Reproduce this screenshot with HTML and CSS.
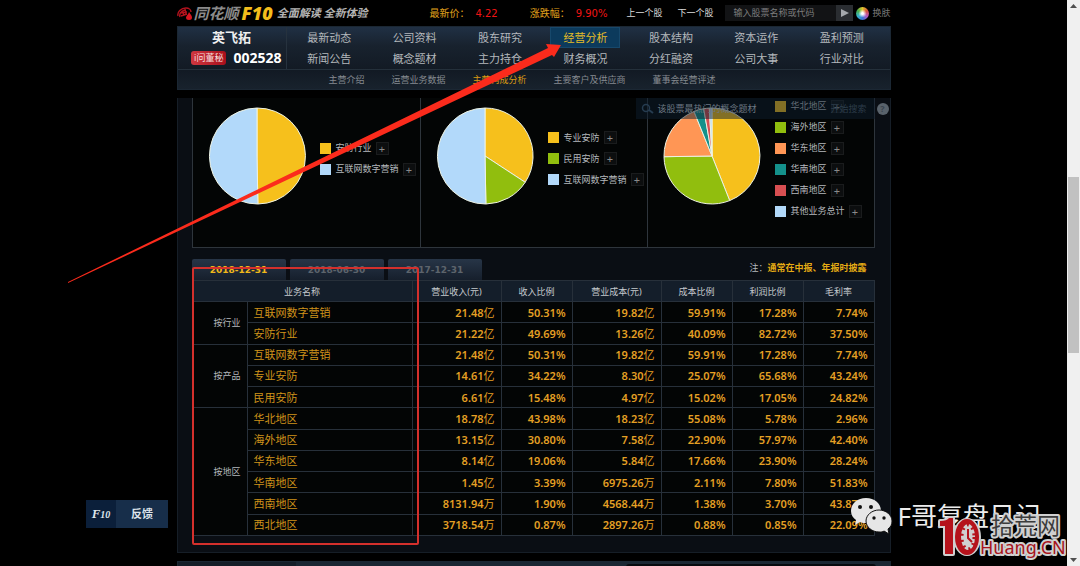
FILE: index.html
```html
<!DOCTYPE html>
<html lang="zh-CN">
<head>
  <meta charset="UTF-8">
  <meta name="viewport" content="width=device-width, initial-scale=1.0">
  <title>英飞拓(002528) 经营分析</title>
  <link rel="stylesheet" href="styles.css">
</head>
<body>

<main class="page">
  <div class="wrap">

    <!-- Top bar -->
    <header class="topbar">
      <a class="logo" href="#">
        <svg class="logo-mark" width="16" height="13" viewBox="0 0 16 13">
          <path d="M1 9C0 5 4 1 9 1c3 0 5 2 5 4M3 10c-1-3 1-6 5-7M5 4l2 4M8 2l1 5M3 6l7-1M4 9l6-2" fill="none" stroke="#b3121d" stroke-width="1.4"/>
          <path d="M12 5c2 3 3 4 3 5.500a3 2.500 0 0 1-6 0C9 9 11 8 12 5z" fill="#d91622"/>
        </svg>
        <span class="logo-name">同花顺</span>
        <span class="logo-f10">F10</span>
      </a>
      <span class="slogan">全面解读 全新体验</span>
      <div class="quote">最新价：<b class="up">4.22</b></div>
      <div class="quote">涨跌幅：<b class="up">9.90%</b></div>
      <div class="stock-links">
        <a href="#">上一个股</a>
        <a href="#">下一个股</a>
      </div>
      <form class="search">
        <input type="text" placeholder="输入股票名称或代码" aria-label="输入股票名称或代码">
        <button type="button" aria-label="搜索"><svg width="8" height="8" viewBox="0 0 8 8"><path d="M0 0l8 4-8 4z" fill="#a5a8ac"/></svg></button>
      </form>
      <a class="skin" href="#">
        <span class="wheel"></span>
        换肤
      </a>
    </header>

    <!-- Navigation -->
    <nav class="nav">
      <div class="nav-main">
        <div class="stock">
          <h1>英飞拓</h1>
          <div class="stock-code"><a href="#">i问董秘</a><strong>002528</strong></div>
        </div>
        <div class="menu">
          <a href="#">最新动态</a>
          <a href="#">公司资料</a>
          <a href="#">股东研究</a>
          <a class="active" href="#">经营分析</a>
          <a href="#">股本结构</a>
          <a href="#">资本运作</a>
          <a href="#">盈利预测</a>
          <a href="#">新闻公告</a>
          <a href="#">概念题材</a>
          <a href="#">主力持仓</a>
          <a href="#">财务概况</a>
          <a href="#">分红融资</a>
          <a href="#">公司大事</a>
          <a href="#">行业对比</a>
        </div>
      </div>
      <div class="submenu">
        <a href="#">主营介绍</a>
        <a href="#">运营业务数据</a>
        <a class="active" href="#">主营构成分析</a>
        <a href="#">主要客户及供应商</a>
        <a href="#">董事会经营评述</a>
      </div>
    </nav>

    <section class="panel">
      <!-- Pie charts -->
      <div class="charts">
        <div class="chart">
          <svg class="pie" viewBox="-49 -49 98 98">
            <path class="c-yellow" d="M0 0V-48A48 48 0 0 1 0.900 48z"/>
            <path class="c-blue" d="M0 0L0.900 48A48 48 0 0 1 0-48z"/>
          </svg>
          <ul class="legend">
            <li><i class="b-yellow"></i>安防行业<button type="button">+</button></li>
            <li><i class="b-blue"></i>互联网数字营销<button type="button">+</button></li>
          </ul>
        </div>
        <div class="chart">
          <svg class="pie" viewBox="-49 -49 98 98">
            <path class="c-yellow" d="M0 0V-48A48 48 0 0 1 40.200 26.300z"/>
            <path class="c-green" d="M0 0L40.200 26.300A48 48 0 0 1 0.900 48z"/>
            <path class="c-blue" d="M0 0L0.900 48A48 48 0 0 1 0-48z"/>
          </svg>
          <ul class="legend">
            <li><i class="b-yellow"></i>专业安防<button type="button">+</button></li>
            <li><i class="b-green"></i>民用安防<button type="button">+</button></li>
            <li><i class="b-blue"></i>互联网数字营销<button type="button">+</button></li>
          </ul>
        </div>
        <div class="chart">
          <svg class="pie" viewBox="-49 -49 98 98">
            <path class="c-yellow" d="M0 0V-48A48 48 0 0 1 17.700 44.600z"/>
            <path class="c-green" d="M0 0L17.700 44.600A48 48 0 0 1-48 0.700z"/>
            <path class="c-orange" d="M0 0L-48 0.700A48 48 0 0 1-18-44.500z"/>
            <path class="c-teal" d="M0 0L-18-44.500A48 48 0 0 1-8.300-47.300z"/>
            <path class="c-red" d="M0 0L-8.300-47.300A48 48 0 0 1-2.700-47.900z"/>
            <path class="c-blue" d="M0 0L-2.700-47.900A48 48 0 0 1 0-48z"/>
          </svg>
          <ul class="legend">
            <li><i class="b-yellow"></i>华北地区<button type="button">+</button></li>
            <li><i class="b-green"></i>海外地区<button type="button">+</button></li>
            <li><i class="b-orange"></i>华东地区<button type="button">+</button></li>
            <li><i class="b-teal"></i>华南地区<button type="button">+</button></li>
            <li><i class="b-red"></i>西南地区<button type="button">+</button></li>
            <li><i class="b-blue"></i>其他业务总计<button type="button">+</button></li>
          </ul>
        </div>
      </div>

      <!-- Floating topic search -->
      <div class="topic-search">
        <svg width="13" height="12" viewBox="0 0 13 12"><circle cx="5" cy="5" r="3.500" fill="none" stroke="#263c50" stroke-width="1.500"/><path d="M8 7l4 3" stroke="#263c50" stroke-width="2"/></svg>
        <span>该股票最热门的概念题材</span>
        <a href="#">开始搜索</a>
      </div>
      <span class="help">?</span>

      <!-- Report dates -->
      <div class="tabs">
        <button class="tab active" type="button">2018-12-31</button>
        <button class="tab" type="button">2018-06-30</button>
        <button class="tab" type="button">2017-12-31</button>
        <p class="note">注：<b>通常在中报、年报时披露</b></p>
      </div>

      <table class="data">
        <colgroup>
          <col class="w-group"><col class="w-name"><col class="w-money"><col class="w-rate"><col class="w-money"><col class="w-rate"><col class="w-rate"><col class="w-rate">
        </colgroup>
        <thead>
          <tr><th colspan="2">业务名称</th><th>营业收入(元)</th><th>收入比例</th><th>营业成本(元)</th><th>成本比例</th><th>利润比例</th><th>毛利率</th></tr>
        </thead>
        <tbody>
          <tr><th rowspan="2">按行业</th><td class="name">互联网数字营销</td><td>21.48<span>亿</span></td><td>50.31%</td><td>19.82<span>亿</span></td><td>59.91%</td><td>17.28%</td><td>7.74%</td></tr>
          <tr><td class="name">安防行业</td><td>21.22<span>亿</span></td><td>49.69%</td><td>13.26<span>亿</span></td><td>40.09%</td><td>82.72%</td><td>37.50%</td></tr>
          <tr><th rowspan="3">按产品</th><td class="name">互联网数字营销</td><td>21.48<span>亿</span></td><td>50.31%</td><td>19.82<span>亿</span></td><td>59.91%</td><td>17.28%</td><td>7.74%</td></tr>
          <tr><td class="name">专业安防</td><td>14.61<span>亿</span></td><td>34.22%</td><td>8.30<span>亿</span></td><td>25.07%</td><td>65.68%</td><td>43.24%</td></tr>
          <tr><td class="name">民用安防</td><td>6.61<span>亿</span></td><td>15.48%</td><td>4.97<span>亿</span></td><td>15.02%</td><td>17.05%</td><td>24.82%</td></tr>
          <tr><th rowspan="6">按地区</th><td class="name">华北地区</td><td>18.78<span>亿</span></td><td>43.98%</td><td>18.23<span>亿</span></td><td>55.08%</td><td>5.78%</td><td>2.96%</td></tr>
          <tr><td class="name">海外地区</td><td>13.15<span>亿</span></td><td>30.80%</td><td>7.58<span>亿</span></td><td>22.90%</td><td>57.97%</td><td>42.40%</td></tr>
          <tr><td class="name">华东地区</td><td>8.14<span>亿</span></td><td>19.06%</td><td>5.84<span>亿</span></td><td>17.66%</td><td>23.90%</td><td>28.24%</td></tr>
          <tr><td class="name">华南地区</td><td>1.45<span>亿</span></td><td>3.39%</td><td>6975.26<span>万</span></td><td>2.11%</td><td>7.80%</td><td>51.83%</td></tr>
          <tr><td class="name">西南地区</td><td>8131.94<span>万</span></td><td>1.90%</td><td>4568.44<span>万</span></td><td>1.38%</td><td>3.70%</td><td>43.87%</td></tr>
          <tr><td class="name">西北地区</td><td>3718.54<span>万</span></td><td>0.87%</td><td>2897.26<span>万</span></td><td>0.88%</td><td>0.85%</td><td>22.09%</td></tr>
        </tbody>
      </table>
    </section>

    <section class="next-panel"><div class="next-search"></div></section>

    <!-- Hand-drawn marks over the page -->
    <div class="mark-box"></div>
    <svg class="mark-arrow" width="500" height="245" viewBox="0 0 500 245">
      <path d="M0 242L480 8 478 4 493 5 486 17 484 15 0 243z" fill="#fb2b1c"/>
    </svg>
  </div>

  <a class="feedback" href="#"><span class="feedback-f10">F<small>10</small></span><span class="feedback-text">反馈</span></a>

  <!-- Watermarks -->
  <div class="wechat">
    <svg width="43" height="38" viewBox="0 0 43 38">
      <path d="M16 1C7 1 1 7 1 14c0 4 2 7 5 9l-1 5 5-3c2 1 4 1 6 1 9 0 15-5 15-12S25 1 16 1z" fill="#e6e6e6"/>
      <path d="M29 13c-7 0-13 5-13 11s6 11 13 11c2 0 4 0 5-1l5 3-1-5c3-2 4-5 4-8 0-6-6-11-13-11z" fill="#e6e6e6" stroke="#111" stroke-width="1"/>
      <g fill="#111"><circle cx="10" cy="10" r="2"/><circle cx="21" cy="10" r="2"/><circle cx="24" cy="21" r="1.700"/><circle cx="34" cy="21" r="1.700"/></g>
    </svg>
    <span>F哥复盘日记</span>
  </div>
  <svg class="site-mark" width="130" height="48" viewBox="0 0 130 48">
    <g stroke="#d0d0d0" stroke-width="4" stroke-linejoin="round">
      <path d="M3 5q7 0 9-3h4v36H8V10H3z"/>
      <ellipse cx="30" cy="21" rx="12" ry="17"/>
    </g>
    <path d="M3 5q7 0 9-3h4v36H8V10H3z" fill="#b5121b"/>
    <ellipse cx="30" cy="21" rx="12" ry="18" fill="#b5121b"/>
    <ellipse cx="31" cy="21" rx="7" ry="13" fill="#d0d0d0"/>
    <ellipse cx="31" cy="21" rx="6" ry="12" fill="none" stroke="#b5121b" stroke-width="3" stroke-dasharray="2 4"/>
    <path d="M31 13v9l4 4" fill="none" stroke="#b5121b" stroke-width="2"/>
    <text class="site-cn" x="54" y="18">拾荒网</text>
    <text class="site-en" x="43" y="38">Huang.CN</text>
  </svg>
</main>

<!-- Window scrollbar -->
<aside class="scrollbar">
  <svg width="7" height="4" viewBox="0 0 7 4"><path d="M0 4l3.500-4L7 4z" fill="#505050"/></svg>
  <div class="track"><div class="thumb"></div></div>
  <svg width="7" height="4" viewBox="0 0 7 4"><path d="M0 0l3.500 4L7 0z" fill="#505050"/></svg>
</aside>

</body>
</html>
```
FILE: styles.css
```css
* {
  box-sizing: border-box;
}

body {
  display: flex;
  height: 100vh;
  margin: 0;
  overflow: hidden;
  background-color: #000;
  color: #b4b8bc;
  font: 9px/20px "Noto Sans", "Noto Sans CJK SC", sans-serif;
}

a {
  color: inherit;
  text-decoration: none;
}

button,
input {
  margin: 0;
  padding: 0;
  border: 0;
  font: inherit;
}

.page {
  position: relative;
  flex: 1;
  overflow: hidden;
}

.wrap {
  position: relative;
  max-width: 714px;
  margin: 0 auto;
}

/* Top bar */
.topbar {
  display: flex;
  align-items: center;
  height: 26px;
  white-space: nowrap;
}

.logo {
  display: flex;
  align-items: center;
  gap: 1px;
  font-style: italic;
  font-weight: bold;
}

.logo-name {
  color: #8b8b8b;
  font-size: 15px;
}

.logo-f10 {
  margin-left: 2px;
  color: #f4bd1c;
  font-size: 18px;
  font-weight: 900;
}

.slogan {
  margin: 0 auto 0 4px;
  color: #b5b5b5;
  font-size: 11px;
  font-style: italic;
  font-weight: bold;
}

.quote {
  margin-right: 32px;
  color: #e0a11c;
  font-size: 10px;
}

.up {
  margin-left: 6px;
  color: #f01414;
  font-family: "DejaVu Sans", sans-serif;
  font-weight: normal;
}

.stock-links {
  display: flex;
  gap: 15px;
  margin: 0 12px 0 -13px;
  color: #dcdcdc;
}

.search {
  display: flex;
  width: 128px;
  height: 16px;
  background-color: #15171a;
}

.search input {
  flex: 1;
  min-width: 0;
  padding-left: 8px;
  background-color: #121315;
  color: #858585;
}

.search input::placeholder {
  color: #7d7d7d;
}

.search button {
  display: grid;
  place-items: center;
  width: 17px;
  background-color: #2a2d31;
}

.skin {
  display: flex;
  align-items: center;
  gap: 3px;
  margin-left: 3px;
  color: #777;
}

.wheel {
  width: 13px;
  height: 13px;
  border-radius: 50%;
  background: radial-gradient(#fff 10%, transparent 45%), conic-gradient(#e2c62c, #d6503c, #b65ac0, #3b76d8, #35b4c9, #4bb04c, #e2c62c);
}

/* Navigation */
.nav {
  border: 1px solid #1b2733;
  background: linear-gradient(#203044, #18222e 30%, #121a24 70%, #18222d);
}

.nav-main {
  display: flex;
  height: 43px;
  padding-right: 5px;
  border-bottom: 1px solid #24303b;
}

.stock {
  width: 109px;
  border-right: 1px solid #26323e;
  text-align: center;
}

.stock h1 {
  margin: 0;
  color: #eee;
  font-size: 13px;
  line-height: 21px;
}

.stock-code {
  display: flex;
  align-items: center;
  justify-content: flex-end;
  gap: 7px;
  padding-right: 4px;
}

.stock-code a {
  padding: 0 3px;
  border-radius: 3px;
  background: linear-gradient(90deg, #cf3740, #a80f1b);
  color: #f5dcdc;
  line-height: 14px;
}

.stock-code strong {
  color: #fff;
  font-size: 14px;
}

.menu {
  display: grid;
  flex: 1;
  grid-template-columns: repeat(7, 1fr);
  grid-auto-rows: 21px;
  justify-items: center;
  font-size: 11px;
  line-height: 21px;
}

.menu a {
  width: 70px;
  text-align: center;
}

.menu .active {
  border: 1px solid #17486b;
  background-color: #0c3a5c;
  color: #e5bd26;
  line-height: 19px;
}

.submenu {
  display: flex;
  gap: 27px;
  padding-left: 151px;
  color: #858a90;
  line-height: 19px;
}

.submenu .active {
  color: #d99a12;
}

/* Main panel */
.panel {
  position: relative;
  margin-top: 8px;
  padding: 0 15px 16px 14px;
  border: 1px solid #161e27;
  border-top: 0;
  background-color: #0a0e14;
}

.charts {
  display: grid;
  grid-template-columns: repeat(3, 1fr);
  grid-template-rows: 100%;
  height: 150px;
  border: 1px solid #2e353c;
  border-top: 0;
  background-color: #030505;
}

.chart {
  display: flex;
  align-items: center;
  gap: 14px;
  padding: 0 0 28px 15px;
}

.chart + .chart {
  border-left: 1px solid #2e353c;
}

.pie {
  flex: none;
  width: 98px;
  height: 98px;
  margin-bottom: 6px;
}

.pie path {
  stroke: #eef3e4;
  stroke-width: 1;
}

.c-yellow { fill: #f6c01c; }
.c-blue { fill: #b2d9fa; }
.c-green { fill: #91be0e; }
.c-orange { fill: #ff9655; }
.c-teal { fill: #14918b; }
.c-red { fill: #d84f52; }

.b-yellow { background-color: #f6c01c; }
.b-blue { background-color: #b2d9fa; }
.b-green { background-color: #91be0e; }
.b-orange { background-color: #ff9655; }
.b-teal { background-color: #14918b; }
.b-red { background-color: #d84f52; }

.legend {
  margin: 0;
  padding: 0;
  list-style: none;
  white-space: nowrap;
}

.legend li {
  display: flex;
  align-items: center;
  height: 21px;
}

.legend i {
  width: 11px;
  height: 11px;
  margin-right: 5px;
}

.legend button {
  width: 13px;
  height: 13px;
  margin-left: 4px;
  border: 1px solid #1a1c1d;
  background-color: #0c0e0f;
  color: #8a8a8a;
  font-size: 11px;
  line-height: 11px;
}

.topic-search {
  position: absolute;
  top: 0;
  right: 15px;
  display: flex;
  align-items: center;
  gap: 4px;
  width: 239px;
  height: 21px;
  padding: 0 8px 0 5px;
  background-color: rgba(14, 30, 46, 0.5);
  color: #6c7782;
}

.topic-search a {
  margin-left: auto;
  color: #2c3c4a;
}

.help {
  position: absolute;
  top: 5px;
  right: 1px;
  width: 12px;
  height: 12px;
  border-radius: 50%;
  background-color: #59626b;
  color: #3a444e;
  font-weight: bold;
  line-height: 12px;
  text-align: center;
}

/* Report dates */
.tabs {
  display: flex;
  gap: 4px;
  margin-top: 11px;
}

.tab {
  width: 94px;
  height: 21px;
  border-radius: 2px 2px 0 0;
  background: linear-gradient(#273547, #161f2c);
  color: #5d646c;
  font-family: "DejaVu Sans", sans-serif;
  font-size: 9px;
  font-weight: bold;
}

.tab.active {
  color: #f0b81a;
}

.note {
  margin: 0 8px 0 auto;
  line-height: 17px;
}

.note b {
  color: #e5ab14;
}

/* Data table */
.data {
  width: 100%;
  height: 256px;
  border-collapse: collapse;
  table-layout: fixed;
  background-color: #030505;
  line-height: 15px;
}

.data th,
.data td {
  padding: 0 6px;
  border: 1px solid #27303a;
}

.data th {
  font-weight: normal;
}

.data thead th {
  height: 21px;
  background-color: #141e2a;
  color: #c5c9cd;
}

.data tbody th {
  text-align: right;
}

.data td {
  color: #e5a024;
  font-size: 11px;
  font-weight: 600;
  text-align: right;
}

.data td span {
  font-weight: normal;
}

.data .name {
  color: #d0931a;
  font-weight: normal;
  text-align: left;
}

.w-group { width: 55px; }
.w-name { width: 165px; }
.w-money { width: 89px; }
.w-rate { width: 71px; }

.next-panel {
  height: 40px;
  margin-top: 8px;
  padding: 2px 14px 0 448px;
  border: 1px solid #1a2733;
  background: linear-gradient(90deg, #141e28 118px, #1a2733 118px);
}

.next-search {
  height: 20px;
  border-radius: 3px;
  background-color: #060a0e;
}

/* Marks */
.mark-box {
  position: absolute;
  top: 267px;
  left: 15px;
  width: 227px;
  height: 278px;
  border: 2px solid #d4302c;
  border-radius: 2px;
}

.mark-arrow {
  position: absolute;
  top: 40px;
  left: -109px;
}

.feedback {
  position: absolute;
  bottom: 38px;
  left: 86px;
  display: flex;
  width: 82px;
  color: #dfe5ec;
  font-size: 11px;
  font-weight: bold;
  line-height: 27px;
  text-align: center;
}

.feedback-f10 {
  width: 30px;
  background-color: #0b1f3a;
  font-family: "Liberation Serif", serif;
  font-size: 13px;
  font-style: italic;
}

.feedback-f10 small {
  font-size: 10px;
}

.feedback-text {
  flex: 1;
  background-color: #172e4a;
}

/* Watermarks */
.wechat {
  position: absolute;
  right: 26px;
  bottom: 31px;
  display: flex;
  align-items: center;
  gap: 5px;
  color: #ececec;
  font-size: 26px;
  line-height: 38px;
}

.site-mark {
  position: absolute;
  right: 0;
  bottom: 2px;
  overflow: visible;
}

.site-mark text {
  paint-order: stroke;
  stroke: #d0d0d0;
  stroke-width: 4px;
  stroke-linejoin: round;
}

.site-cn {
  fill: #3c3c3c;
  font-size: 23px;
}

.site-en {
  fill: #a8141c;
  font-size: 18px;
}

/* Scrollbar */
.scrollbar {
  display: flex;
  flex-direction: column;
  align-items: center;
  width: 13px;
  padding: 4px 0;
  background-color: #f0f0f0;
}

.track {
  flex: 1;
  width: 11px;
}

.thumb {
  height: 32%;
  margin-top: 169px;
  background-color: #c1c1c1;
}
```
